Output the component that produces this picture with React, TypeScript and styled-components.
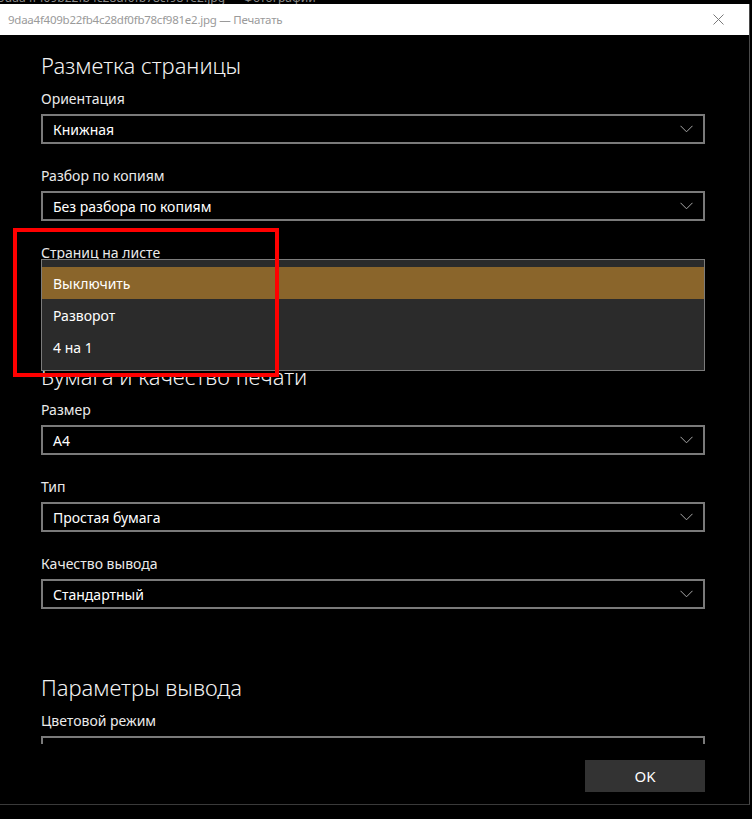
import styled, { createGlobalStyle } from 'styled-components';

const GlobalStyle = createGlobalStyle`
  html, body {
    margin: 0;
    padding: 0;
    background: #000;
  }
  body {
    font-family: "Segoe UI", "Noto Sans", "Open Sans", sans-serif;
  }
`;

const Screen = styled.div`
  width: 752px;
  height: 819px;
  background: #000;
  overflow: hidden;
`;

const BackTitle = styled.div`
  height: 4px;
  overflow: hidden;
  color: #8a8a8a;
  font-size: 12px;
  line-height: 12px;
  white-space: nowrap;
  & > span {
    display: block;
    margin: -8px 0 0 -2px;
  }
`;

const Window = styled.div`
  position: relative;
  width: 749px;
  height: 800px;
  border-right: 1px solid #4a4a4a;
  border-bottom: 1px solid #3a3a3a;
  background: #000;
  display: flex;
  flex-direction: column;
`;

const TitleBar = styled.div`
  height: 31px;
  flex: none;
  background: #fff;
  display: flex;
  align-items: center;
  justify-content: space-between;
  padding: 0 25px 0 8px;
`;

const TitleText = styled.div`
  font-size: 11.5px;
  color: #9a9a9a;
  letter-spacing: -0.25px;
`;

const Scroll = styled.div`
  height: 709px;
  flex: none;
  overflow: hidden;
  padding: 0 44px 0 41px;
`;

const SectionTitle = styled.div<{ $first?: boolean }>`
  margin-top: ${p => (p.$first ? '15px' : '63px')};
  font-size: 22px;
  line-height: 30px;
  font-weight: 300;
  color: #f2f2f2;
`;

const Field = styled.div<{ $first?: boolean }>`
  margin-top: ${p => (p.$first ? '9px' : '22px')};
`;

const Label = styled.div`
  font-size: 14px;
  line-height: 20px;
  color: #eaeaea;
  margin-bottom: 5px;
`;

const SelectBox = styled.div`
  position: relative;
  height: 30px;
  box-sizing: border-box;
  border: 2px solid #7a7a7a;
  display: flex;
  align-items: center;
  justify-content: space-between;
  padding: 0 10px 0 10px;
  color: #fff;
  font-size: 14px;
`;

const Chevron = () => (
  <svg width="13" height="8" viewBox="0 0 13 8">
    <polyline points="0.5,0.8 6.5,6.8 12.5,0.8" fill="none" stroke="#a8a8a8" strokeWidth="1" />
  </svg>
);

const Popup = styled.div`
  position: absolute;
  left: -2px;
  right: -2px;
  top: -11px;
  background: #2b2b2b;
  border: 1px solid #7c7c7c;
  padding: 7px 0 7px;
  z-index: 2;
`;

const Option = styled.div<{ $active?: boolean }>`
  height: 32px;
  display: flex;
  align-items: center;
  padding-left: 11px;
  font-size: 14px;
  color: #fff;
  background: ${p => (p.$active ? '#8a652b' : 'transparent')};
`;

const Highlight = styled.div`
  position: absolute;
  left: 13px;
  top: 224px;
  width: 266px;
  height: 149px;
  box-sizing: border-box;
  border: 4px solid #ff0000;
  z-index: 3;
  pointer-events: none;
`;

const Footer = styled.div`
  flex: 1;
  display: flex;
  justify-content: flex-end;
  align-items: flex-start;
  padding: 16px 44px 0 0;
`;

const OkButton = styled.button`
  width: 120px;
  height: 32px;
  border: none;
  background: #333333;
  color: #fff;
  font-family: inherit;
  font-size: 15px;
  padding: 0;
`;

type Select = { label: string; value: string; options?: string[] };

const sections: { title: string; fields: Select[] }[] = [
  {
    title: 'Разметка страницы',
    fields: [
      { label: 'Ориентация', value: 'Книжная' },
      { label: 'Разбор по копиям', value: 'Без разбора по копиям' },
      { label: 'Страниц на листе', value: 'Выключить', options: ['Выключить', 'Разворот', '4 на 1'] },
    ],
  },
  {
    title: 'Бумага и качество печати',
    fields: [
      { label: 'Размер', value: 'A4' },
      { label: 'Тип', value: 'Простая бумага' },
      { label: 'Качество вывода', value: 'Стандартный' },
    ],
  },
  {
    title: 'Параметры вывода',
    fields: [{ label: 'Цветовой режим', value: 'Цветной' }],
  },
];

export default function App() {
  return (
    <Screen>
      <GlobalStyle />
      <BackTitle>
        <span>9daa4f409b22fb4c28df0fb78cf981e2.jpg — Фотографии</span>
      </BackTitle>
      <Window>
        <TitleBar>
          <TitleText>9daa4f409b22fb4c28df0fb78cf981e2.jpg — Печатать</TitleText>
          <svg width="11" height="11" viewBox="0 0 11 11">
            <path d="M0.5 0.5 L10.5 10.5 M10.5 0.5 L0.5 10.5" stroke="#7a7a7a" strokeWidth="1" />
          </svg>
        </TitleBar>
        <Scroll>
          {sections.map((s, si) => (
            <div key={s.title}>
              <SectionTitle $first={si === 0}>{s.title}</SectionTitle>
              {s.fields.map((f, fi) => (
                <Field key={f.label} $first={fi === 0}>
                  <Label>{f.label}</Label>
                  <SelectBox>
                    <span>{f.value}</span>
                    <Chevron />
                    {f.options && (
                      <Popup>
                        {f.options.map(o => (
                          <Option key={o} $active={o === f.value}>{o}</Option>
                        ))}
                      </Popup>
                    )}
                  </SelectBox>
                </Field>
              ))}
            </div>
          ))}
        </Scroll>
        <Footer>
          <OkButton type="button">OK</OkButton>
        </Footer>
        <Highlight />
      </Window>
    </Screen>
  );
}
